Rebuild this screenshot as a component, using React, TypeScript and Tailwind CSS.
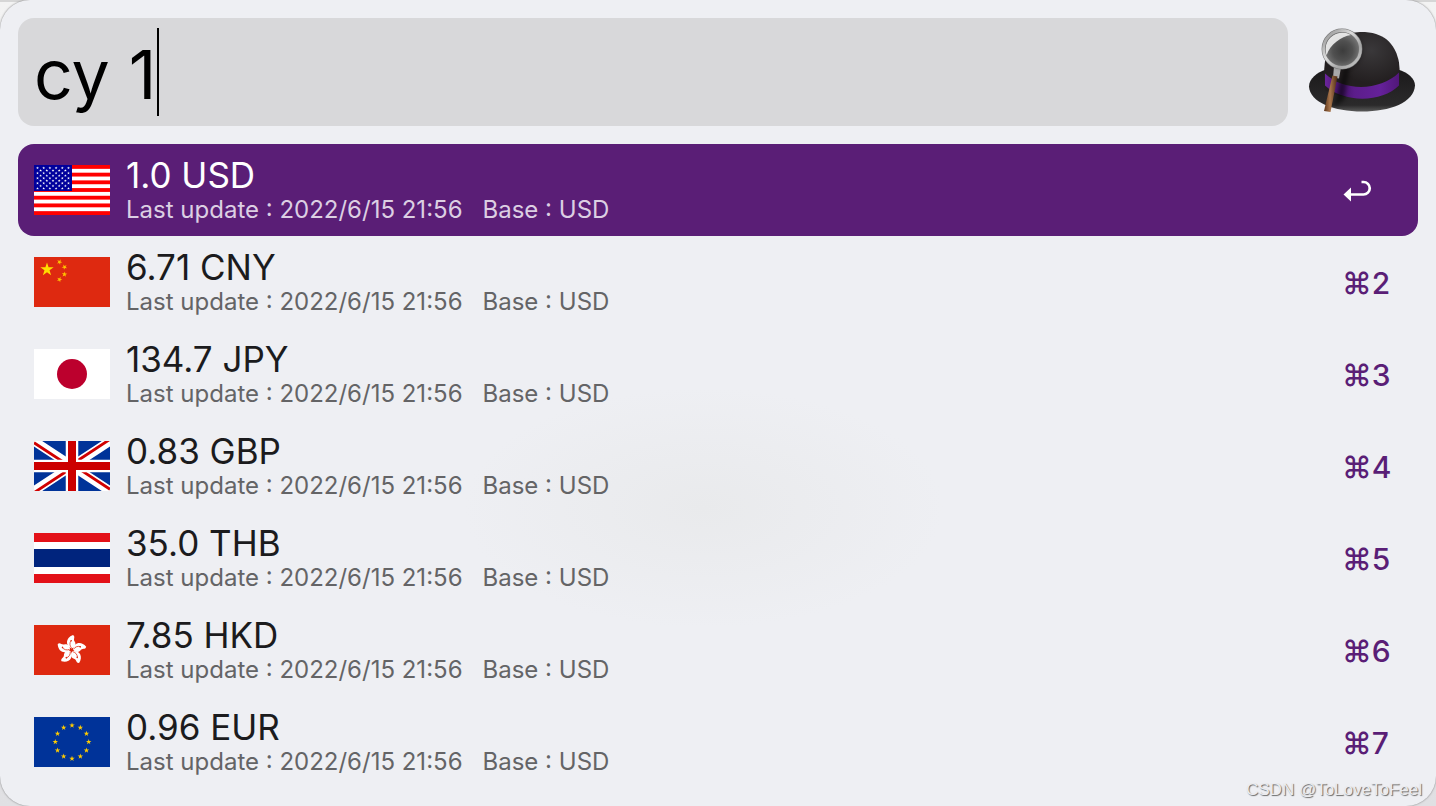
import type { ReactNode } from "react";

const STAR = "M0 -1 L0.2245 -0.309 L0.951 -0.309 L0.363 0.118 L0.588 0.809 L0 0.382 L-0.588 0.809 L-0.363 0.118 L-0.951 -0.309 L-0.2245 -0.309 Z";

function Star({ x, y, r, fill, rotate = 0 }: { x: number; y: number; r: number; fill: string; rotate?: number }) {
  return <path d={STAR} fill={fill} transform={`translate(${x} ${y}) rotate(${rotate}) scale(${r})`} />;
}

function Flag({ label, children }: { label: string; children: ReactNode }) {
  return (
    <svg viewBox="0 0 76 50" className="h-[50px] w-[76px] shrink-0" role="img" aria-label={label}>
      {children}
    </svg>
  );
}

function FlagUS() {
  const dots: ReactNode[] = [];
  for (let row = 0; row < 9; row++) {
    const count = row % 2 === 0 ? 6 : 5;
    for (let col = 0; col < count; col++) {
      dots.push(
        <Star key={`${row}-${col}`} x={3.5 + col * 6.2 + (row % 2 ? 3.1 : 0)} y={3 + row * 2.55} r={1.5} fill="#fff" />,
      );
    }
  }
  return (
    <Flag label="United States">
      <rect width="76" height="50" fill="#fff" />
      {[0, 1, 2, 3, 4, 5, 6].map((i) => (
        <rect key={i} y={(i * 100) / 13} width="76" height={50 / 13} fill="#f00" />
      ))}
      <rect width="38" height="26" fill="#00009c" />
      {dots}
    </Flag>
  );
}

function FlagCN() {
  return (
    <Flag label="China">
      <rect width="76" height="50" fill="#de2910" />
      <Star x={13} y={12.5} r={7} fill="#ffde00" />
      <Star x={25.5} y={5} r={2.9} fill="#ffc400" rotate={24} />
      <Star x={30.5} y={10} r={2.9} fill="#ffc400" rotate={46} />
      <Star x={30.5} y={17.3} r={2.9} fill="#ffc400" rotate={8} />
      <Star x={25.5} y={22.5} r={2.9} fill="#ffc400" rotate={22} />
    </Flag>
  );
}

function FlagJP() {
  return (
    <Flag label="Japan">
      <rect width="76" height="50" fill="#fff" />
      <circle cx="38" cy="25" r="15" fill="#bc002d" />
    </Flag>
  );
}

function FlagGB() {
  return (
    <Flag label="United Kingdom">
      <rect width="76" height="50" fill="#039" />
      <path d="M0 0 L76 50 M76 0 L0 50" stroke="#fff" strokeWidth="9" />
      <path d="M0 1.7 L36 25.4 M76 48.3 L40 24.6 M0 51.7 L36 28 M76 -1.7 L40 22" stroke="#d00000" strokeWidth="2.8" />
      <path d="M38 0 V50 M0 25 H76" stroke="#fff" strokeWidth="12.5" />
      <path d="M38 0 V50 M0 25 H76" stroke="#c00" strokeWidth="8" />
    </Flag>
  );
}

function FlagTH() {
  return (
    <Flag label="Thailand">
      <rect width="76" height="50" fill="#e31118" />
      <rect y="9" width="76" height="32" fill="#fff" />
      <rect y="16" width="76" height="18" fill="#00247d" />
    </Flag>
  );
}

function FlagHK() {
  return (
    <Flag label="Hong Kong">
      <rect width="76" height="50" fill="#de2910" />
      {[0, 72, 144, 216, 288].map((a) => (
        <g key={a} transform={`translate(37.5 25) rotate(${a})`}>
          <path d="M0 -1.5 C-6 -4 -6.5 -12 1.5 -15 C4.5 -13 1 -11 3.5 -8 C4.8 -5 3 -2.5 0 -1.5 Z" fill="#fff" />
          <path d="M0 -2 C-2 -4.5 -2 -7 -0.5 -9.5" fill="none" stroke="#de2910" strokeWidth="0.7" />
          <circle cx="-0.3" cy="-9.3" r="0.8" fill="#de2910" />
        </g>
      ))}
    </Flag>
  );
}

function FlagEU() {
  return (
    <Flag label="European Union">
      <rect width="76" height="50" fill="#039" />
      {Array.from({ length: 12 }, (_, i) => {
        const t = (i * Math.PI) / 6;
        return <Star key={i} x={38 + 16.7 * Math.sin(t)} y={25 - 16.7 * Math.cos(t)} r={2.9} fill="#fc0" />;
      })}
    </Flag>
  );
}

function HatLogo() {
  return (
    <svg viewBox="0 2.5 110 90" className="h-[90px] w-[110px] shrink-0" role="img" aria-label="Alfred">
      <defs>
        <radialGradient id="dome" cx="0.62" cy="0.28" r="0.5">
          <stop offset="0" stopColor="#3a383a" />
          <stop offset="1" stopColor="#231f20" />
        </radialGradient>
        <linearGradient id="brim" x1="0" y1="0" x2="0" y2="1">
          <stop offset="0" stopColor="#1b1a1b" />
          <stop offset="0.85" stopColor="#2b2a2b" />
          <stop offset="1" stopColor="#5a5a5a" />
        </linearGradient>
        <linearGradient id="band" x1="0" y1="0" x2="1" y2="0">
          <stop offset="0" stopColor="#6b259c" />
          <stop offset="0.22" stopColor="#45136a" />
          <stop offset="0.4" stopColor="#5c1d8b" />
          <stop offset="0.75" stopColor="#65219a" />
          <stop offset="1" stopColor="#511779" />
        </linearGradient>
        <radialGradient id="lens" cx="0.52" cy="0.55" r="0.55">
          <stop offset="0" stopColor="#3c3c3c" />
          <stop offset="0.5" stopColor="#505050" />
          <stop offset="1" stopColor="#808080" />
        </radialGradient>
        <linearGradient id="rim" x1="0" y1="0" x2="1" y2="1">
          <stop offset="0" stopColor="#888" />
          <stop offset="0.4" stopColor="#ddd" />
          <stop offset="0.7" stopColor="#a5a5a5" />
          <stop offset="1" stopColor="#ccc" />
        </linearGradient>
        <linearGradient id="wood" x1="0" y1="0" x2="1" y2="0">
          <stop offset="0" stopColor="#5b3418" />
          <stop offset="0.45" stopColor="#a8764d" />
          <stop offset="1" stopColor="#4c2a12" />
        </linearGradient>
        <filter id="soft" x="-50%" y="-50%" width="200%" height="200%">
          <feGaussianBlur stdDeviation="2" />
        </filter>
      </defs>
      <path d="M1 62 C1 54 9 48 18 45 L90 45 C100 48 107 54 107 61 C106 78 82 87 54 87 C26 87 2 78 1 62 Z" fill="url(#brim)" />
      <path d="M17 66 C15 45 16 30 24 18 C32 9 43 7.500 57 7.500 C79 9 88 22 91 38 C92 47 92 55 91 62 C76 76 35 76 17 66 Z" fill="url(#dome)" />
      <path d="M17 49 C35 67 72 67 91 48 L91 61 C74 78.500 35 78.500 17 61 Z" fill="url(#band)" />
      <path d="M36 43 L42 41 L36 76 L25 83 Z" fill="#000" opacity="0.5" filter="url(#soft)" />
      <path d="M26 42 L33 43 L31 54 L25 53 Z" fill="#a9a9a9" />
      <path d="M24.500 51 L29.500 52 L22.500 87.500 L16 86.500 Z" fill="url(#wood)" />
      <circle cx="36" cy="26" r="18" fill="#000" opacity="0.35" filter="url(#soft)" />
      <circle cx="34" cy="24.500" r="18" fill="url(#lens)" />
      <path d="M18.500 31 C14.500 18 24 7 38 8 C41 8.500 42 9 43 10.500 C33 12 22 20 18.500 31 Z" fill="#f1f1f1" opacity="0.9" />
      <circle cx="34" cy="24.500" r="18.500" fill="none" stroke="#777" strokeWidth="3.800" />
      <circle cx="34" cy="24.500" r="18.500" fill="none" stroke="url(#rim)" strokeWidth="2.800" />
    </svg>
  );
}

function ReturnIcon() {
  return (
    <svg viewBox="-1 0 30 22" className="h-[22px] w-[30px]" role="img" aria-label="Return">
      <path d="M7 14.500 H20.500 A6.200 6.200 0 0 0 20.500 2 H18.500" fill="none" stroke="#fff" strokeWidth="2.700" />
      <path d="M0.500 14.500 L8 7.500 V21.500 Z" fill="#fff" />
    </svg>
  );
}

const results = [
  { title: "1.0 USD", flag: <FlagUS /> },
  { title: "6.71 CNY", flag: <FlagCN /> },
  { title: "134.7 JPY", flag: <FlagJP /> },
  { title: "0.83 GBP", flag: <FlagGB /> },
  { title: "35.0 THB", flag: <FlagTH /> },
  { title: "7.85 HKD", flag: <FlagHK /> },
  { title: "0.96 EUR", flag: <FlagEU /> },
];

export default function App() {
  return (
    <div className="min-h-screen bg-[linear-gradient(#d6d6d6_2px,#f3f3f3_2px,#e0e0e3)] font-['Inter',sans-serif]">
      <main className="relative min-h-screen rounded-[30px] bg-[#eeeff3] bg-[radial-gradient(ellipse_240px_120px_at_49%_63%,#e9eaec,#eeeff300)] p-[18px] shadow-[0_0_2px_#777]">
        <header className="flex items-center gap-5">
          <label className="flex h-[108px] min-w-0 flex-1 items-center rounded-2xl bg-[#d8d8da] pl-4">
            <input
              aria-label="Search"
              defaultValue="cy 1"
              spellCheck={false}
              className="h-full min-w-0 bg-transparent pt-1 text-[68px] text-black caret-transparent outline-none [field-sizing:content]"
            />
            <span className="h-[88px] w-[2px] shrink-0 bg-black" />
          </label>
          <HatLogo />
        </header>
        <ul className="mt-[18px]">
          {results.map((item, i) => {
            const active = i === 0;
            return (
              <li key={item.title}>
                <button
                  type="button"
                  className={`flex h-[92px] w-full items-center gap-4 rounded-2xl px-4 text-left ${active ? "bg-[#5a1e76]" : ""}`}
                >
                  {item.flag}
                  <span className="flex min-w-0 flex-1 flex-col">
                    <span className={`text-[35px] leading-10 ${active ? "text-white" : "text-[#1b1b1d]"}`}>
                      {item.title}
                    </span>
                    <span className={`flex gap-5 text-[24px] leading-[30px] ${active ? "text-[#dccfe3]" : "text-[#646466]"}`}>
                      <span>Last update : 2022/6/15 21:56</span>
                      <span>Base : USD</span>
                    </span>
                  </span>
                  <span className="w-[60px] shrink-0 pt-0.5 text-[30px] font-medium text-[#5a1e76]">
                    {active ? <ReturnIcon /> : `⌘${i + 1}`}
                  </span>
                </button>
              </li>
            );
          })}
        </ul>
        <p className="absolute right-[14px] bottom-[6px] font-['Liberation_Sans',Arial,sans-serif] text-[17px] leading-5 text-[#ececef] [text-shadow:1px_1px_1px_#666]">
          CSDN @ToLoveToFeel
        </p>
      </main>
    </div>
  );
}
